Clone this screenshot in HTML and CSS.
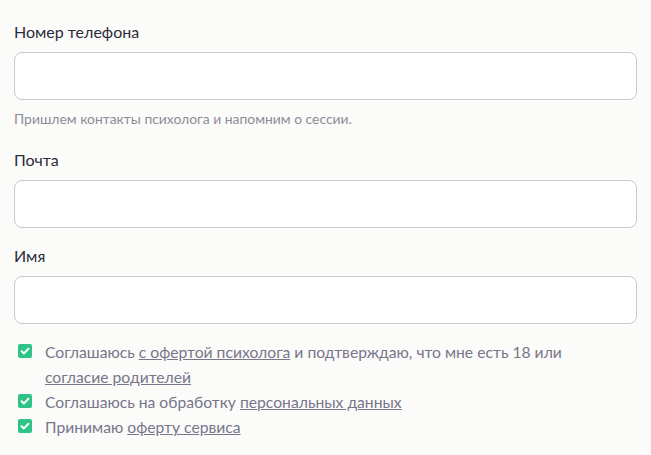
FILE: index.html
```html
<!DOCTYPE html>
<html lang="ru">
<head>
    <meta charset="UTF-8">
    <meta name="viewport" content="width=device-width, initial-scale=1.0">
    <title>Контакты</title>
    <link rel="stylesheet" href="styles.css">
</head>
<body>
    <form class="form">
        <div class="field">
            <label class="label" for="phone">Номер телефона</label>
            <input class="input" id="phone" type="tel">
            <div class="hint">Пришлем контакты психолога и напомним о сессии.</div>
        </div>
        <div class="field">
            <label class="label" for="email">Почта</label>
            <input class="input" id="email" type="email">
        </div>
        <div class="field">
            <label class="label" for="name">Имя</label>
            <input class="input" id="name" type="text">
        </div>
        <div class="agreements">
            <label class="check">
                <span class="box"><svg viewBox="0 0 14 14" width="14" height="14"><path d="M3.6 7.2 L6 9.4 L10.4 4.8" fill="none" stroke="#fff" stroke-width="2" stroke-linecap="round" stroke-linejoin="round"/></svg></span>
                <span class="check-text">Соглашаюсь <a href="#">с офертой психолога</a> и подтверждаю, что мне есть 18 или <a href="#">согласие родителей</a></span>
            </label>
            <label class="check">
                <span class="box"><svg viewBox="0 0 14 14" width="14" height="14"><path d="M3.6 7.2 L6 9.4 L10.4 4.8" fill="none" stroke="#fff" stroke-width="2" stroke-linecap="round" stroke-linejoin="round"/></svg></span>
                <span class="check-text">Соглашаюсь на обработку <a href="#">персональных данных</a></span>
            </label>
            <label class="check">
                <span class="box"><svg viewBox="0 0 14 14" width="14" height="14"><path d="M3.6 7.2 L6 9.4 L10.4 4.8" fill="none" stroke="#fff" stroke-width="2" stroke-linecap="round" stroke-linejoin="round"/></svg></span>
                <span class="check-text">Принимаю <a href="#">оферту сервиса</a></span>
            </label>
        </div>
    </form>
</body>
</html>
```

FILE: styles.css
```css
body {
    margin: 0;
    background: #fbfbf9;
    font-family: Lato, "Noto Sans", sans-serif;
    color: #2c2c3a;
}
.form {
    padding: 20px 14px;
    display: flex;
    flex-direction: column;
}
.field {
    display: flex;
    flex-direction: column;
    margin-bottom: 16px;
}
.field:first-child {
    margin-bottom: 20px;
}
.label {
    font-size: 16px;
    line-height: 24px;
    margin-bottom: 8px;
}
.input {
    box-sizing: border-box;
    height: 48px;
    width: 100%;
    border: 1px solid #c9c8cc;
    border-radius: 8px;
    background: #ffffff;
    font: inherit;
    margin: 0;
}
.hint {
    margin-top: 10px;
    font-size: 13.9px;
    line-height: 18px;
    color: #8d8c96;
}
.agreements {
    display: flex;
    flex-direction: column;
}
.check {
    display: flex;
    align-items: flex-start;
    gap: 13px;
    padding-left: 4px;
    font-size: 15.7px;
    line-height: 25px;
    color: #77768a;
}
.check-text {
    max-width: 530px;
}
.box {
    flex: none;
    width: 14px;
    height: 14px;
    margin-top: 4px;
    border-radius: 2px;
    background: #2dc486;
    display: flex;
}
.check-text a {
    color: inherit;
    text-decoration: underline;
}
```
